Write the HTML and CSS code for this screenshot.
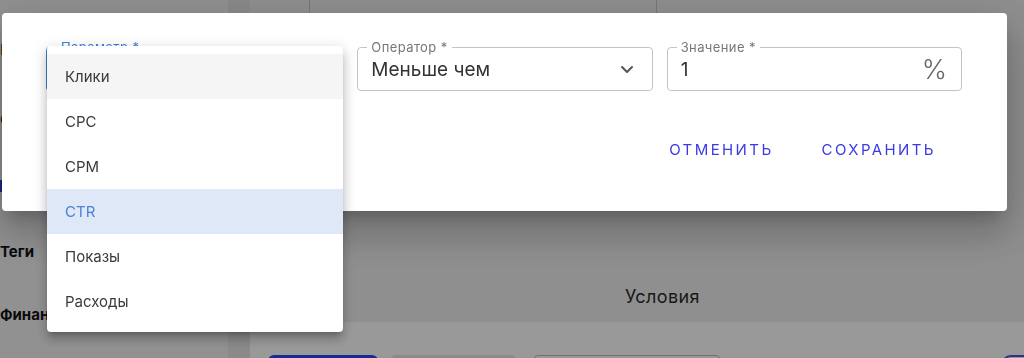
FILE: index.html
```html
<!DOCTYPE html>
<html lang="ru">
<head>
    <meta charset="UTF-8">
    <meta name="viewport" content="width=device-width, initial-scale=1.0">
    <title>Правило</title>
    <link rel="stylesheet" href="styles.css">
</head>
<body>

    <!-- страница под модальным окном -->
    <div class="page">
        <aside class="sidebar">
            <p class="side-label side-label-top">Название</p>
            <p class="side-label">Статус</p>
            <div class="side-mark"></div>
            <p class="side-label side-bold side-tags">Теги</p>
            <p class="side-label side-bold side-fin">Финансы</p>
        </aside>
        <div class="gutter"></div>
        <main class="main">
            <div class="top-row">
                <div class="top-cell top-cell-first"></div>
                <div class="top-cell"></div>
                <div class="top-cell top-cell-last"></div>
            </div>
            <h3 class="section-title">Условия</h3>
            <div class="bottom-band">
                <button class="btn-dark"></button>
                <button class="btn-gray"></button>
                <div class="fake-input"></div>
                <div class="fake-toggle"></div>
            </div>
        </main>
    </div>

    <div class="backdrop"></div>

    <!-- диалог -->
    <div class="dialog">
        <div class="fields">
            <div class="field field-focused">
                <span class="field-label field-label-blue">Параметр *</span>
            </div>
            <div class="field">
                <span class="field-label">Оператор *</span>
                <span class="field-value">Меньше чем</span>
                <svg class="chevron" width="24" height="24" viewBox="0 0 24 24">
                    <polyline points="7,10 12,15 17,10" fill="none" stroke="#555" stroke-width="2" stroke-linecap="round" stroke-linejoin="round"/>
                </svg>
            </div>
            <div class="field">
                <span class="field-label">Значение *</span>
                <span class="field-value">1</span>
                <span class="field-unit">%</span>
            </div>
        </div>
        <div class="actions">
            <button class="text-btn">Отменить</button>
            <button class="text-btn">Сохранить</button>
        </div>
    </div>

    <!-- выпадающий список -->
    <ul class="menu">
        <li class="menu-item menu-item-hover">Клики</li>
        <li class="menu-item">CPC</li>
        <li class="menu-item">CPM</li>
        <li class="menu-item menu-item-selected">CTR</li>
        <li class="menu-item">Показы</li>
        <li class="menu-item">Расходы</li>
    </ul>

</body>
</html>
```

FILE: styles.css
```css
body {
    font-family: Inter, "Noto Sans", sans-serif;
    margin: 0;
    padding: 0;
    height: 358px;
    overflow: hidden;
    background-color: #f2f2f2;
}
.page {
    display: flex;
    height: 358px;
    overflow: hidden;
}
.sidebar {
    flex-shrink: 0;
    width: 228px;
    background-color: #f2f2f2;
    padding-top: 40px;
    box-sizing: border-box;
}
.side-label {
    margin: 0 0 50px;
    font-size: 15px;
    color: #222;
    line-height: 20px;
    white-space: nowrap;
}
.side-mark {
    width: 4px;
    height: 12px;
    background-color: #2b3fd8;
    margin-bottom: 50px;
}
.side-bold {
    font-weight: 700;
    color: #111;
}
.side-tags {
    margin-bottom: 43px;
}
.gutter {
    flex-shrink: 0;
    width: 22px;
    background-color: #e6e6e6;
}
.main {
    flex: 1;
    min-width: 0;
    display: flex;
    flex-direction: column;
    background-color: #efefef;
}
.top-row {
    flex-shrink: 0;
    display: flex;
    height: 120px;
}
.top-cell {
    flex-shrink: 0;
    width: 346px;
    border-right: 1px solid #c8c8c8;
}
.top-cell-first {
    width: 59px;
}
.top-cell-last {
    flex: 1;
    border-right: none;
}
.section-title {
    flex-shrink: 0;
    margin: 167px 0 0;
    padding-left: 375px;
    font-size: 18px;
    font-weight: 400;
    letter-spacing: 0.4px;
    color: #2a2a2a;
    line-height: 20px;
}
.bottom-band {
    flex-shrink: 0;
    height: 60px;
    margin-top: 15px;
    background-color: #fff;
    display: flex;
    align-items: flex-start;
    padding: 33px 0 0 18px;
}
.btn-dark {
    flex-shrink: 0;
    width: 110px;
    height: 36px;
    border: none;
    border-radius: 6px;
    background-color: #2e46f2;
}
.btn-gray {
    flex-shrink: 0;
    width: 127px;
    height: 36px;
    border: none;
    border-radius: 6px;
    background-color: #e8e8e8;
    margin-left: 12px;
}
.fake-input {
    flex-shrink: 0;
    width: 184px;
    height: 36px;
    border: 1px solid #bbb;
    border-radius: 4px;
    margin-left: 17px;
}
.fake-toggle {
    flex-shrink: 0;
    width: 30px;
    height: 18px;
    border: 2px solid #4a55e0;
    border-radius: 10px;
    margin-left: 281px;
}
.backdrop {
    position: fixed;
    top: 0;
    left: 0;
    right: 0;
    bottom: 0;
    background-color: rgba(0, 0, 0, 0.4);
}
.dialog {
    position: fixed;
    left: 2px;
    top: 13px;
    width: 1005px;
    height: 198px;
    box-sizing: border-box;
    padding: 34px 45px 0 44px;
    background-color: #fff;
    border-radius: 4px;
    box-shadow: 0 11px 15px -7px rgba(0, 0, 0, 0.2), 0 24px 38px 3px rgba(0, 0, 0, 0.14), 0 9px 46px 8px rgba(0, 0, 0, 0.12);
}
.fields {
    display: flex;
    gap: 14px;
}
.field {
    position: relative;
    flex: 1;
    height: 44px;
    box-sizing: border-box;
    border: 1px solid #c4c4c4;
    border-radius: 4px;
    display: flex;
    align-items: center;
    padding: 0 13px;
}
.field-focused {
    border: 2px solid #3f7fdc;
}
.field-label {
    position: absolute;
    top: -8px;
    left: 9px;
    padding: 0 4px;
    background-color: #fff;
    font-size: 13px;
    letter-spacing: 0.4px;
    line-height: 14px;
    color: #777;
}
.field-label-blue {
    color: #3f7fdc;
    top: -9px;
}
.field-value {
    flex: 1;
    font-size: 19px;
    color: #333;
}
.chevron {
    flex-shrink: 0;
}
.field-unit {
    font-size: 27px;
    font-weight: 300;
    color: #666;
    margin-right: 1px;
}
.actions {
    display: flex;
    justify-content: flex-end;
    gap: 32px;
    margin-top: 43px;
    padding-right: 18px;
}
.text-btn {
    background: none;
    border: none;
    padding: 6px 8px;
    font-family: inherit;
    font-size: 15px;
    letter-spacing: 2.4px;
    text-transform: uppercase;
    color: #3a3ae6;
    cursor: pointer;
}
.menu {
    position: fixed;
    left: 47px;
    top: 46px;
    width: 296px;
    margin: 0;
    padding: 8px 0;
    list-style: none;
    background-color: #fff;
    border-radius: 4px;
    box-shadow: 0 5px 5px -3px rgba(0, 0, 0, 0.2), 0 8px 10px 1px rgba(0, 0, 0, 0.14), 0 3px 14px 2px rgba(0, 0, 0, 0.12);
}
.menu-item {
    height: 45px;
    line-height: 45px;
    padding-left: 18px;
    font-size: 15px;
    color: #3a3a3a;
}
.menu-item-hover {
    background-color: #f5f5f5;
}
.menu-item-selected {
    background-color: #dfe8f6;
    color: #4a82d8;
}
```
